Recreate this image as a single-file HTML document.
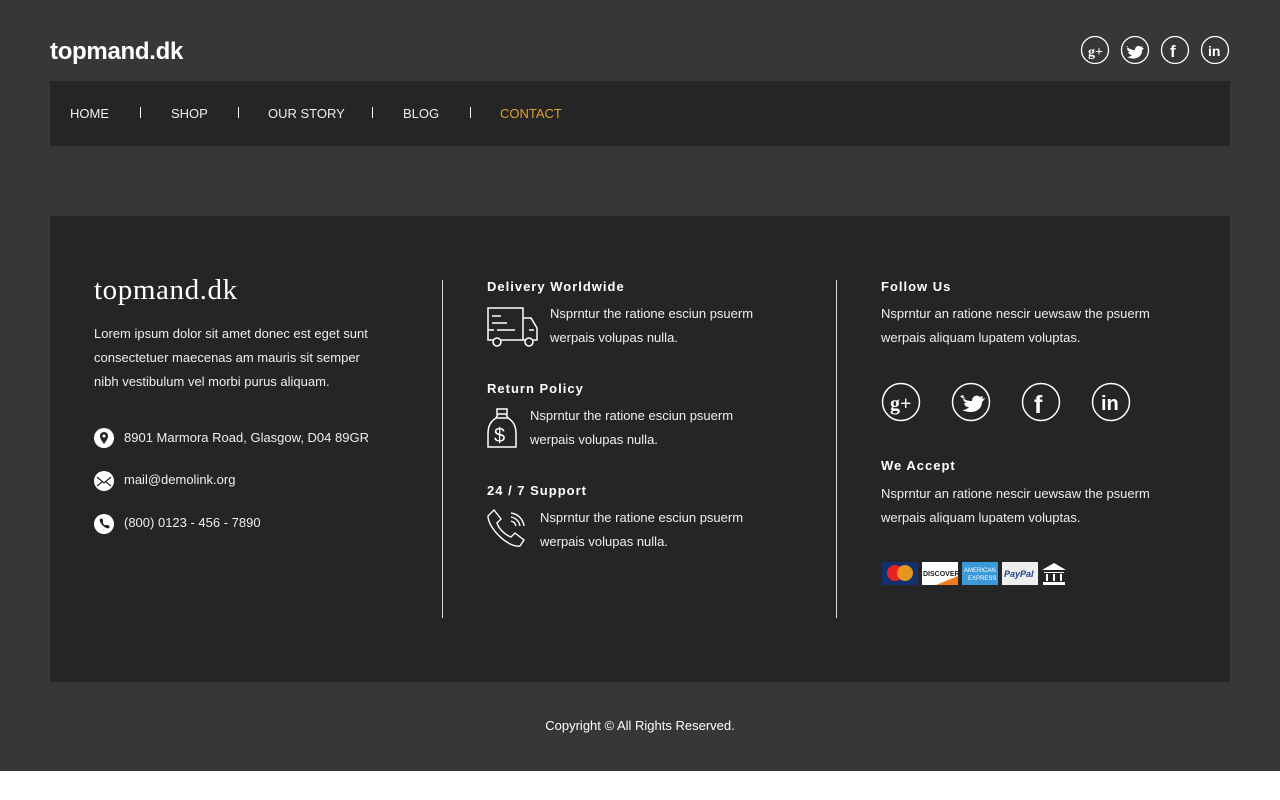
<!DOCTYPE html>
<html><head><meta charset="utf-8"><style>
*{margin:0;padding:0;box-sizing:border-box}
body{width:1280px;height:800px;background:#fff;font-family:"Liberation Sans",sans-serif;color:#fff;overflow:hidden;position:relative}
.page{position:absolute;left:0;top:0;width:1280px;height:771px;background:#373737}
.abs{position:absolute}
.logo{left:50px;top:38px;font-size:24px;font-weight:bold;letter-spacing:-0.3px}
.nav{left:50px;top:81px;width:1180px;height:65px;background:#252525}
.nav span{position:absolute;top:25px;font-size:13px;color:#eee}
.sep{position:absolute;top:26px;width:1px;height:11px;background:#fff}
.foot{left:50px;top:216px;width:1180px;height:466px;background:#252525}
.vline{position:absolute;top:64px;width:1px;height:338px;background:#ddd}
.h{font-size:13px;font-weight:bold;letter-spacing:1px}
.t{font-size:13px;line-height:24px;color:#eee}
svg{position:absolute}
</style></head><body>
<div class="page">
<div class="abs logo">topmand.dk</div>
<svg style="left:1080px;top:35px" width="150" height="30" viewBox="0 0 150 30" fill="none" stroke="#fff" stroke-width="1.3">
<circle cx="15" cy="15" r="13.5"/><circle cx="55" cy="15" r="13.5"/><circle cx="95" cy="15" r="13.5"/><circle cx="135" cy="15" r="13.5"/>
<text x="8" y="21" font-size="14" font-weight="bold" fill="#fff" stroke="none" font-family="Liberation Serif">g+</text>
<path d="M46 11c3 3 6 4 9 4c0-4 4-5 6-3l2-1l-1 2l2 0c-1 1-2 2-2 3c0 6-7 10-15 6c2 0 4-1 5-2c-2 0-3-1-4-3h2c-2-1-3-2-3-4l2 1c-2-1-2-2-1-3z" fill="#fff" stroke="none"/>
<text x="90" y="22" font-size="17" font-weight="bold" fill="#fff" stroke="none">f</text>
<text x="128" y="21" font-size="14" font-weight="bold" fill="#fff" stroke="none">in</text>
</svg>
<div class="abs nav">
<span style="left:20px">HOME</span><div class="sep" style="left:90px"></div>
<span style="left:121px">SHOP</span><div class="sep" style="left:188px"></div>
<span style="left:218px">OUR STORY</span><div class="sep" style="left:322px"></div>
<span style="left:353px">BLOG</span><div class="sep" style="left:420px"></div>
<span style="left:450px;color:#e0a030">CONTACT</span>
</div>
<div class="abs foot">
<div class="abs" style="left:44px;top:58px;font-family:'Liberation Serif',serif;font-size:29px;letter-spacing:0.6px">topmand.dk</div>
<div class="abs t" style="left:44px;top:106px;width:290px">Lorem ipsum dolor sit amet donec est eget sunt consectetuer maecenas am mauris sit semper nibh vestibulum vel morbi purus aliquam.</div>
<svg style="left:44px;top:212px" width="20" height="110" viewBox="0 0 20 110">
<circle cx="10" cy="10" r="10" fill="#fff"/><path d="M10 16c-3-4-4-6-4-8a4 4 0 0 1 8 0c0 2-1 4-4 8z" fill="#252525"/><circle cx="10" cy="8" r="1.5" fill="#fff"/>
<circle cx="10" cy="53" r="10" fill="#fff"/><path d="M3 49l7 6l7-6M3 58l5-4M17 58l-5-4" stroke="#252525" fill="none" stroke-width="1.2"/>
<circle cx="10" cy="96" r="10" fill="#fff"/><path d="M6 91c1-1 2-1 3 1l0 2c-1 1 2 4 3 3l2 0c2 1 2 2 1 3c-3 2-11-6-9-9z" fill="#252525"/>
</svg>
<div class="abs t" style="left:74px;top:210px">8901 Marmora Road, Glasgow, D04 89GR</div>
<div class="abs t" style="left:74px;top:252px">mail@demolink.org</div>
<div class="abs t" style="left:74px;top:295px">(800) 0123 - 456 - 7890</div>
<div class="vline" style="left:392px"></div>
<div class="vline" style="left:786px"></div>
<div class="abs h" style="left:437px;top:63px">Delivery Worldwide</div>
<svg style="left:437px;top:90px" width="52" height="42" viewBox="0 0 52 42" fill="none" stroke="#fff" stroke-width="1.5">
<path d="M1 2h35v32H1zM36 12h8l6 10v12h-14M5 10h9M5 17h15M1 24h6M10 24h18M42 24h5"/><circle cx="10" cy="36" r="4" fill="#252525"/><circle cx="42" cy="36" r="4" fill="#252525"/></svg>
<div class="abs t" style="left:500px;top:86px;width:240px">Nsprntur the ratione esciun psuerm werpais volupas nulla.</div>
<div class="abs h" style="left:437px;top:165px">Return Policy</div>
<svg style="left:437px;top:192px" width="32" height="42" viewBox="0 0 32 42" fill="none" stroke="#fff" stroke-width="1.5">
<path d="M10 1h10v5H10zM11 6l-2 4h12l-2-4M9 10c-8 5-8 12-8 17v12h28v-12c0-5 0-12-8-17"/><text x="7" y="34" font-size="20" fill="#fff" stroke="none">$</text></svg>
<div class="abs t" style="left:480px;top:188px;width:240px">Nsprntur the ratione esciun psuerm werpais volupas nulla.</div>
<div class="abs h" style="left:437px;top:267px">24 / 7 Support</div>
<svg style="left:437px;top:293px" width="42" height="42" viewBox="0 0 42 42" fill="none" stroke="#fff" stroke-width="1.4">
<path d="M7 1l7 9l-4 4c2 6 8 12 14 14l4-4l9 7l-4 6c-12 2-32-18-32-30z"/><path d="M24 8c5 1 8 4 9 9M24 4c7 1 12 6 13 13M24 12c3 1 4 2 5 5"/></svg>
<div class="abs t" style="left:490px;top:290px;width:240px">Nsprntur the ratione esciun psuerm werpais volupas nulla.</div>
<div class="abs h" style="left:831px;top:63px">Follow Us</div>
<div class="abs t" style="left:831px;top:86px;width:300px">Nsprntur an ratione nescir uewsaw the psuerm werpais aliquam lupatem voluptas.</div>
<svg style="left:831px;top:166px" width="252" height="40" viewBox="0 0 252 40" fill="none" stroke="#fff" stroke-width="1.5">
<circle cx="20" cy="20" r="18.5"/><circle cx="90" cy="20" r="18.5"/><circle cx="160" cy="20" r="18.5"/><circle cx="230" cy="20" r="18.5"/>
<text x="9" y="28" font-size="20" font-weight="bold" fill="#fff" stroke="none" font-family="Liberation Serif">g+</text>
<path d="M79 14c4 4 8 5 12 5c0-5 5-7 8-4l3-1l-1 3l3-1c-1 2-2 3-3 4c0 8-9 13-20 8c3 0 5-1 7-3c-3 0-4-1-5-4h3c-3-1-4-3-4-5l3 1c-3-2-3-3-2-4z" fill="#fff" stroke="none"/>
<text x="153" y="31" font-size="25" font-weight="bold" fill="#fff" stroke="none">f</text>
<text x="220" y="28" font-size="20" font-weight="bold" fill="#fff" stroke="none">in</text>
</svg>
<div class="abs h" style="left:831px;top:242px">We Accept</div>
<div class="abs t" style="left:831px;top:266px;width:300px">Nsprntur an ratione nescir uewsaw the psuerm werpais aliquam lupatem voluptas.</div>
<svg style="left:831px;top:345px" width="190" height="26" viewBox="0 0 190 26">
<rect x="1" y="1" width="36" height="23" fill="#12306b"/><circle cx="14" cy="12" r="8" fill="#e8231f"/><circle cx="24" cy="12" r="8" fill="#f6a21b" opacity=".9"/>
<rect x="41" y="1" width="36" height="23" fill="#fff"/><path d="M55 24l22-9v9z" fill="#f07c1c"/><text x="42" y="15" font-size="7" font-weight="bold" fill="#222">DISCOVER</text>
<rect x="81" y="1" width="36" height="23" fill="#3a9ad9"/><text x="83" y="11" font-size="6" fill="#fff">AMERICAN</text><text x="87" y="19" font-size="6" fill="#fff">EXPRESS</text>
<rect x="121" y="1" width="36" height="23" fill="#eee"/><text x="123" y="16" font-size="9" font-weight="bold" font-style="italic" fill="#1b3f8b">PayPal</text>
<path d="M161 9l12-7l12 7zM163 11h20v1h-20zM165 13h2v7h-2zM172 13h2v7h-2zM179 13h2v7h-2zM162 21h22v3h-22z" fill="#fff"/>
</svg>
</div>
<div class="abs" style="left:0;top:718px;width:1280px;text-align:center;font-size:13px">Copyright © All Rights Reserved.</div>
</div>
</body></html>
